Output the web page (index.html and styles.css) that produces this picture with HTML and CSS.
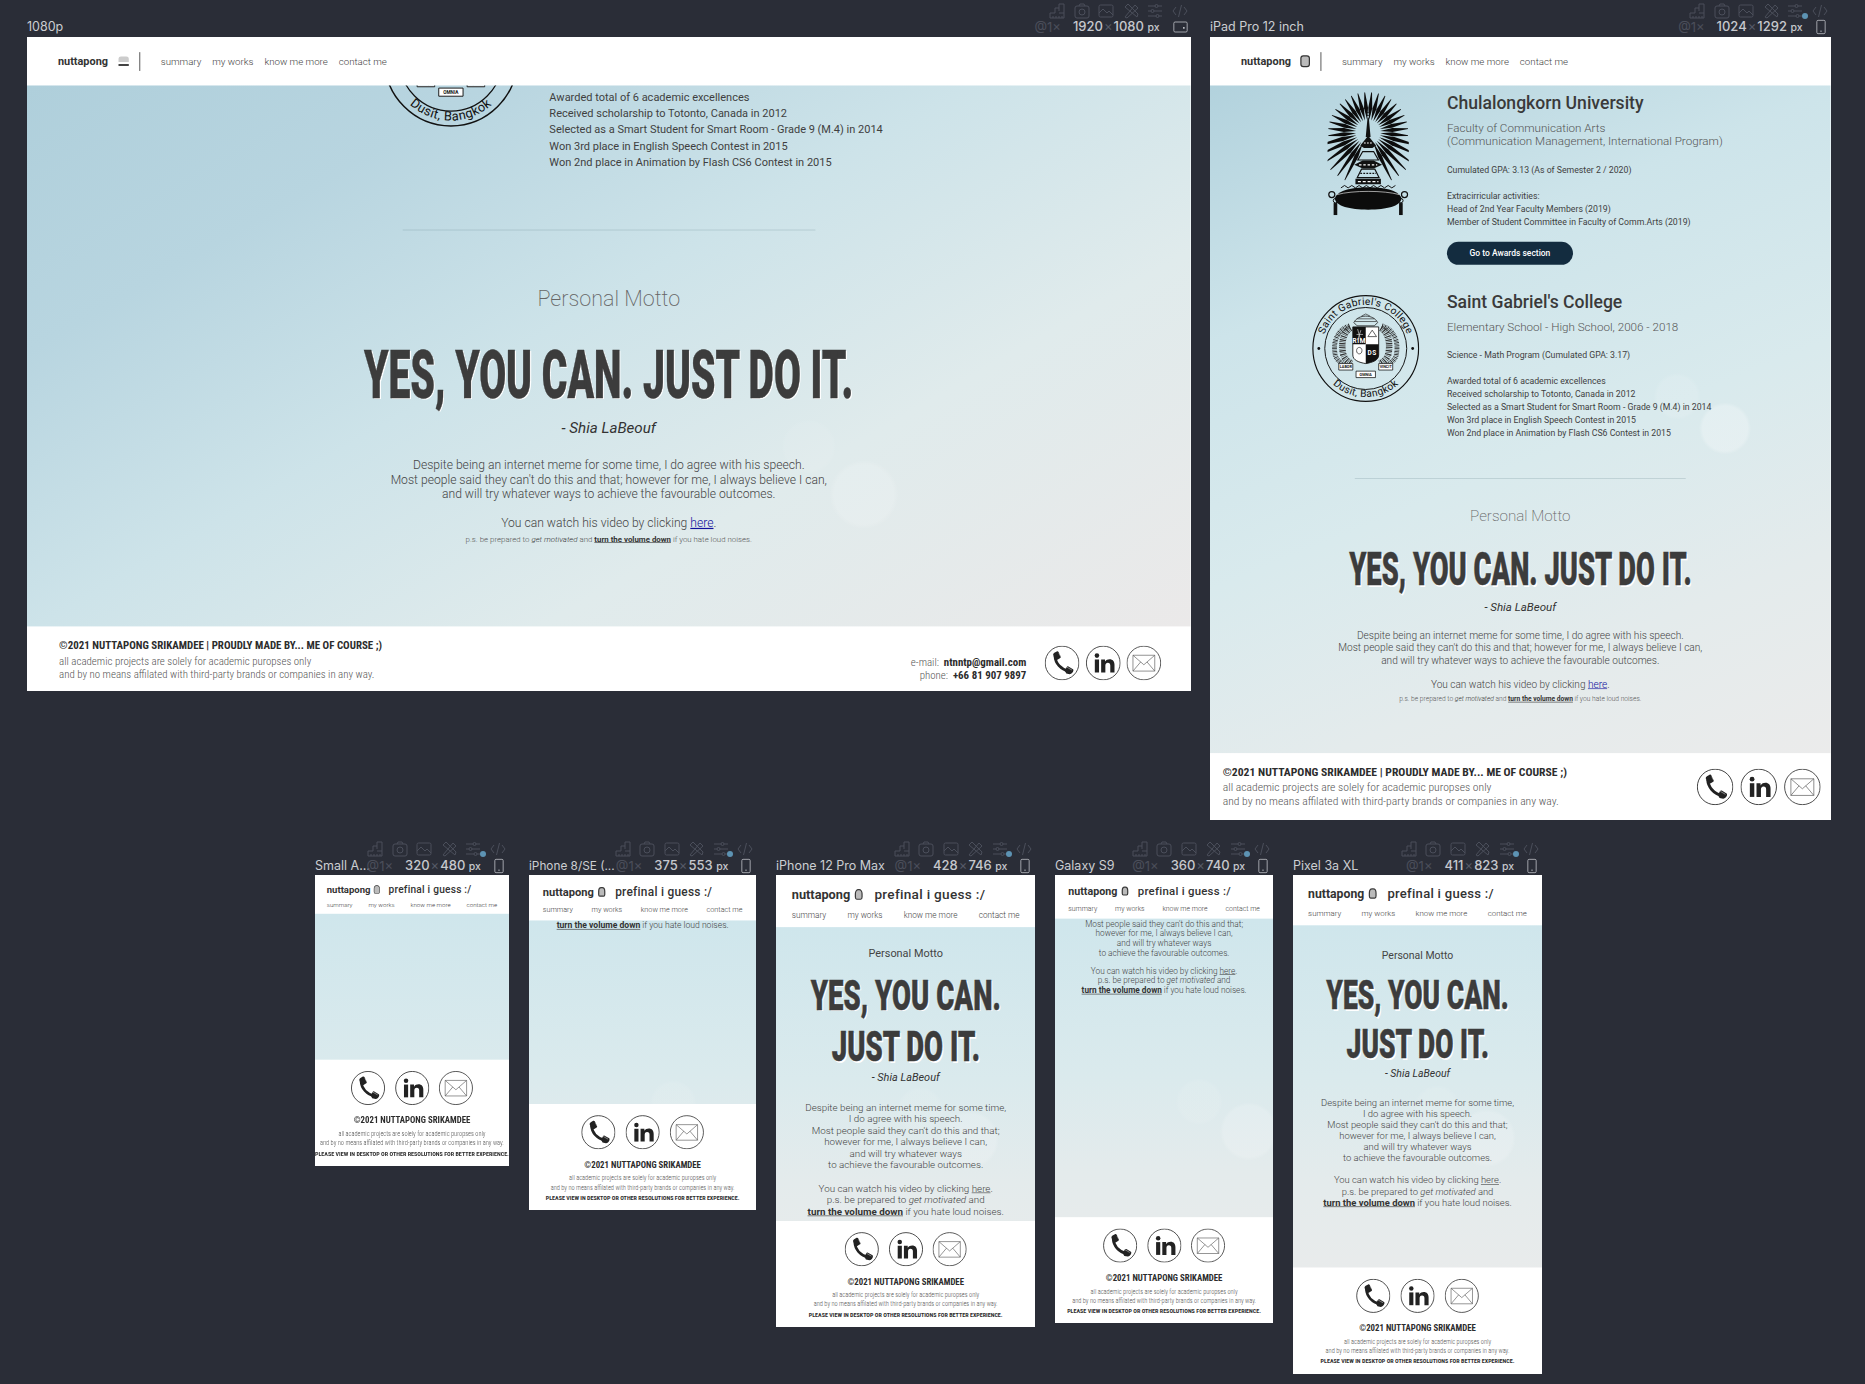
FILE: index.html
```html
<!DOCTYPE html>
<html lang="en">
<head>
<meta charset="utf-8">
<title>Responsive preview - nuttapong</title>
<link rel="stylesheet" href="styles.css">
</head>
<body>
<svg class="sprite" xmlns="http://www.w3.org/2000/svg">
  <defs>
    <symbol id="i-ruler" viewBox="0 0 16 16"><path d="M1 15V10H6V5H10V1H15V15ZM4 15V13M7 15V13M10 15V13M13 15V13M10 5V8M10 10H15" fill="none" stroke="currentColor"/></symbol>
    <symbol id="i-camera" viewBox="0 0 16 16"><rect x="1" y="3" width="14" height="12" rx="2" fill="none" stroke="currentColor"/><path d="M5 3 6 1H10L11 3" fill="none" stroke="currentColor"/><circle cx="8" cy="9" r="3" fill="none" stroke="currentColor"/></symbol>
    <symbol id="i-image" viewBox="0 0 16 16"><rect x="1" y="2" width="14" height="12" rx="1.5" fill="none" stroke="currentColor"/><path d="M1 10 5 6 9 10 11 8 15 12" fill="none" stroke="currentColor"/></symbol>
    <symbol id="i-tools" viewBox="0 0 16 16"><path d="M2 14 12 2 15 5 4 15ZM14 14 2 4 5 1 15 11Z" fill="none" stroke="currentColor"/></symbol>
    <symbol id="i-sliders" viewBox="0 0 16 16"><path d="M1 3H8M11 3H15M1 8H4M7 8H15M1 13H9M12 13H15" fill="none" stroke="currentColor"/><circle cx="9.5" cy="3" r="1.5" fill="none" stroke="currentColor"/><circle cx="5.5" cy="8" r="1.5" fill="none" stroke="currentColor"/><circle cx="10.5" cy="13" r="1.5" fill="none" stroke="currentColor"/></symbol>
    <symbol id="i-code" viewBox="0 0 16 16"><path d="M4 4 1 8 4 12M12 4 15 8 12 12M9.5 2 6.5 14" fill="none" stroke="currentColor"/></symbol>
    <symbol id="i-phone-frame" viewBox="0 0 12 18"><rect x="1" y="1" width="10" height="16" rx="1.5" fill="none" stroke="currentColor"/><path d="M5 14H7" stroke="currentColor"/></symbol>
    <symbol id="i-desk-frame" viewBox="0 0 18 14"><rect x="1" y="1" width="16" height="12" rx="1.5" fill="none" stroke="currentColor"/><path d="M13 7V9" stroke="currentColor" stroke-width="2"/></symbol>

    <symbol id="s-phone" viewBox="0 0 100 100">
      <circle cx="50" cy="50" r="48" fill="#fff" stroke="#2c2c2c" stroke-width="2.4"/>
      <path d="M30 30C31 51 46 68 70 74" fill="none" stroke="#222" stroke-width="8"/>
      <path d="M25 28C24 25 26 22 28 21L35 17C37 16 39 17 40 19L46 31C47 33 46 35 45 36L37 41 31 41Z" fill="#222"/>
      <path d="M58 72 63 62C64 60 66 59 68 60L80 67C82 68 83 70 82 73 81 77 77 81 72 82L62 80Z" fill="#222"/>
      <path d="M41 22 46 32M64 62 78 70" stroke="#fff" stroke-width="1.2"/>
    </symbol>
    <symbol id="s-in" viewBox="0 0 100 100">
      <circle cx="50" cy="50" r="48" fill="#fff" stroke="#2c2c2c" stroke-width="2.4"/>
      <circle cx="32" cy="29" r="6.5" fill="#222"/>
      <rect x="26" y="40" width="12" height="37" fill="#222"/>
      <path d="M44 40H55V46C58 41 63 39 68 39 77 39 82 45 82 55V77H70V57C70 52 68 49 63 49 58 49 56 53 56 57V77H44Z" fill="#222"/>
    </symbol>
    <symbol id="s-mail" viewBox="0 0 100 100">
      <circle cx="50" cy="50" r="48" fill="#fff" stroke="#3a3a3a" stroke-width="2.4"/>
      <path d="M19 28H81V73H19ZM19 28 50 55 81 28M19 73 41 47M81 73 59 47" fill="none" stroke="#555" stroke-width="1.8"/>
    </symbol>

    <path id="seal-top" d="M100 100m-81 0a81 81 0 0 1 162 0"/>
    <path id="seal-bot" d="M100 100m-90 0a90 90 0 0 0 180 0"/>
    <symbol id="seal" viewBox="0 0 200 200">
      <circle cx="100" cy="100" r="98" fill="none" stroke="#111" stroke-width="2.2"/>
      <circle cx="100" cy="100" r="76" fill="none" stroke="#111" stroke-width="1.8"/>
      <circle cx="13" cy="100" r="2.6" fill="#111"/>
      <circle cx="187" cy="100" r="2.6" fill="#111"/>
      <text class="seal-text"><textPath href="#seal-top" startOffset="50%" text-anchor="middle">Saint Gabriel's College</textPath></text>
      <text class="seal-text"><textPath href="#seal-bot" startOffset="50%" text-anchor="middle">Dusit, Bangkok</textPath></text>
      <path d="M78 52C85 36 115 36 122 52L116 58H84Z" fill="none" stroke="#222" stroke-width="1.5"/>
      <path d="M80 50H120M84 45H116M92 40 100 36 108 40" stroke="#222" stroke-width="1.2" fill="none"/>
      <path d="M70 58C46 66 38 90 44 114 48 124 58 130 70 134" fill="none" stroke="#222" stroke-width="9" stroke-dasharray="1.6 1.4 .8 1.6"/>
      <path d="M130 58C154 66 162 90 156 114 152 124 142 130 130 134" fill="none" stroke="#222" stroke-width="9" stroke-dasharray="1.6 1.4 .8 1.6"/>
      <path d="M72 62C58 70 54 90 58 110 60 118 66 124 74 128" fill="none" stroke="#333" stroke-width="12" stroke-dasharray="2.4 1.4 1 1.8"/>
      <path d="M128 62C142 70 146 90 142 110 140 118 134 124 126 128" fill="none" stroke="#333" stroke-width="12" stroke-dasharray="2.4 1.4 1 1.8"/>
      <path d="M76 60H124V112C124 122 112 126 100 128 88 126 76 122 76 112Z" fill="#fff" stroke="#111" stroke-width="1.6"/>
      <path d="M76 60H100V92H76Z" fill="#111"/>
      <path d="M100 92H124V112C124 122 112 126 100 128Z" fill="#111"/>
      <path d="M85 64 91 86M91 66 85 84M83 74H95" stroke="#ddd" stroke-width="1.2"/>
      <text class="seal-ds" x="112" y="112" text-anchor="middle">DS</text>
      <text class="seal-ds" x="88" y="90" text-anchor="middle">RIM</text>
      <path d="M104 78 112 66 120 78ZM83 104C83 112 93 112 93 104 93 96 83 96 83 104Z" fill="none" stroke="#333" stroke-width="1.4"/>
      <path d="M50 128H76V140H50ZM124 128H150V140H124ZM82 142H118V154H82Z" fill="#fff" stroke="#111" stroke-width="1.4"/>
      <text class="seal-motto" x="63" y="137" text-anchor="middle">LABOR</text>
      <text class="seal-motto" x="137" y="137" text-anchor="middle">VINCIT</text>
      <text class="seal-motto" x="100" y="151" text-anchor="middle">OMNIA</text>
    </symbol>

    <polygon id="ray" points="0,-20 3.3,-40 0.6,-66 -0.6,-66 -3.3,-40"/>
    <polygon id="ray-long" points="0,-20 3.4,-44 0.6,-88 -0.6,-88 -3.4,-44"/>
    <symbol id="chula" viewBox="0 0 134 203">
      <g transform="translate(67 66)" fill="#0c0c0c">
        <use href="#ray" transform="rotate(5)"/><use href="#ray" transform="rotate(15)"/><use href="#ray" transform="rotate(25)"/><use href="#ray" transform="rotate(35)"/><use href="#ray" transform="rotate(45)"/><use href="#ray" transform="rotate(55)"/><use href="#ray" transform="rotate(65)"/><use href="#ray" transform="rotate(75)"/><use href="#ray" transform="rotate(85)"/><use href="#ray" transform="rotate(95)"/>
        <use href="#ray" transform="rotate(-5)"/><use href="#ray" transform="rotate(-15)"/><use href="#ray" transform="rotate(-25)"/><use href="#ray" transform="rotate(-35)"/><use href="#ray" transform="rotate(-45)"/><use href="#ray" transform="rotate(-55)"/><use href="#ray" transform="rotate(-65)"/><use href="#ray" transform="rotate(-75)"/><use href="#ray" transform="rotate(-85)"/><use href="#ray" transform="rotate(-95)"/>
        <use href="#ray-long" transform="rotate(105)"/><use href="#ray-long" transform="rotate(115)"/><use href="#ray-long" transform="rotate(125)"/><use href="#ray-long" transform="rotate(135)"/><use href="#ray-long" transform="rotate(145)"/><use href="#ray-long" transform="rotate(154)"/>
        <use href="#ray-long" transform="rotate(-105)"/><use href="#ray-long" transform="rotate(-115)"/><use href="#ray-long" transform="rotate(-125)"/><use href="#ray-long" transform="rotate(-135)"/><use href="#ray-long" transform="rotate(-145)"/><use href="#ray-long" transform="rotate(-154)"/>
      </g>
      <circle cx="67" cy="36" r="2.8" fill="none" stroke="#111" stroke-width="1.2"/>
      <path d="M66 42H68L71 74H63Z" fill="#111"/>
      <path d="M54 88 67 72 80 88 74 92H60Z" fill="#111"/>
      <path d="M60 84H74" stroke="#fff" stroke-width="1.8" stroke-dasharray="3 2"/>
      <path d="M58 98H76L84 112H50Z" fill="none" stroke="#111" stroke-width="2"/>
      <path d="M44 120 58 113H76L90 120 76 126H58Z" fill="#111"/>
      <path d="M52 120H82" stroke="#fff" stroke-width="2" stroke-dasharray="4 3"/>
      <path d="M56 127H78L85 141H49Z" fill="none" stroke="#111" stroke-width="2"/>
      <path d="M54 134H80" stroke="#111" stroke-width="2" stroke-dasharray="3 2"/>
      <path d="M46 143H88V152H46Z" fill="#111"/>
      <path d="M50 147.5H84" stroke="#fff" stroke-width="2" stroke-dasharray="5 3"/>
      <path d="M22 158 28 154 34 158 40 154 46 158 52 154 58 158 64 154 70 158 76 154 82 158 88 154 94 158 100 154 106 158 112 154" fill="none" stroke="#111" stroke-width="1.6"/>
      <path d="M12 176C14 164 36 157 67 157 98 157 120 164 122 176 120 188 98 194 67 194 36 194 14 188 12 176Z" fill="#0c0c0c"/>
      <path d="M16 169C40 162 94 162 118 169" fill="none" stroke="#fff" stroke-width="1"/>
      <circle cx="7" cy="169" r="5" fill="none" stroke="#111" stroke-width="2"/>
      <circle cx="127" cy="169" r="5" fill="none" stroke="#111" stroke-width="2"/>
      <rect x="10" y="183" width="6" height="20" fill="#111"/>
      <rect x="118" y="183" width="6" height="20" fill="#111"/>
      <circle cx="13" cy="179" r="3.6" fill="none" stroke="#111" stroke-width="1.6"/>
      <circle cx="121" cy="179" r="3.6" fill="none" stroke="#111" stroke-width="1.6"/>
    </symbol>
  </defs>
</svg>

<!-- 1080p -->
<section class="window win-1080">
  <div class="win-tools"><svg class="tool"><use href="#i-ruler"/></svg><svg class="tool"><use href="#i-camera"/></svg><svg class="tool"><use href="#i-image"/></svg><svg class="tool"><use href="#i-tools"/></svg><svg class="tool"><use href="#i-sliders"/></svg><svg class="tool"><use href="#i-code"/></svg></div>
  <div class="win-label"><span class="win-name">1080p</span><span class="win-meta"><span class="dim">@1×</span><span class="size">1920<i class="x">×</i>1080 <small>px</small></span><svg class="device device-wide"><use href="#i-desk-frame"/></svg></span></div>
  <div class="frame"><div class="screen desktop">
    <header class="head">
      <strong class="name">nuttapong</strong><span class="glyph glyph-desk"></span><span class="bar"></span>
      <nav class="nav"><a>summary</a><a>my works</a><a>know me more</a><a>contact me</a></nav>
    </header>
    <main class="main">
      <div class="school school-clipped">
        <svg class="seal"><use href="#seal"/></svg>
        <p class="body">Awarded total of 6 academic excellences<br>Received scholarship to Totonto, Canada in 2012<br>Selected as a Smart Student for Smart Room - Grade 9 (M.4) in 2014<br>Won 3rd place in English Speech Contest in 2015<br>Won 2nd place in Animation by Flash CS6 Contest in 2015</p>
      </div>
      <hr class="rule">
      <div class="motto">
        <h2 class="motto-label">Personal Motto</h2>
        <div class="motto-title"><span>YES, YOU CAN. JUST DO IT.</span></div>
        <p class="motto-by">- Shia LaBeouf</p>
        <p class="motto-text">Despite being an internet meme for some time, I do agree with his speech.<br>Most people said they can't do this and that; however for me, I always believe I can,<br>and will try whatever ways to achieve the favourable outcomes.</p>
        <p class="motto-watch">You can watch his video by clicking <a class="link" >here</a>.</p>
        <p class="motto-ps">p.s. be prepared to <em>get motivated</em> and <b class="und">turn the volume down</b> if you hate loud noises.</p>
      </div>
    </main>
    <footer class="foot">
      <div class="legal">
        <p class="legal-title">©2021 NUTTAPONG SRIKAMDEE | PROUDLY MADE BY... ME OF COURSE ;)</p>
        <p class="legal-text">all academic projects are solely for academic puropses only<br>and by no means affilated with third-party brands or companies in any way.</p>
      </div>
      <div class="contact"><p>e-mail: &nbsp;<b>ntnntp@gmail.com</b></p><p>phone: &nbsp;<b>+66 81 907 9897</b></p></div>
      <div class="socials"><svg class="social"><use href="#s-phone"/></svg><svg class="social"><use href="#s-in"/></svg><svg class="social"><use href="#s-mail"/></svg></div>
    </footer>
  </div></div>
</section>

<!-- iPad -->
<section class="window win-ipad">
  <div class="win-tools"><svg class="tool"><use href="#i-ruler"/></svg><svg class="tool"><use href="#i-camera"/></svg><svg class="tool"><use href="#i-image"/></svg><svg class="tool"><use href="#i-tools"/></svg><svg class="tool"><use href="#i-sliders"/></svg><svg class="tool"><use href="#i-code"/></svg><span class="tool-dot"></span></div>
  <div class="win-label"><span class="win-name">iPad Pro 12 inch</span><span class="win-meta"><span class="dim">@1×</span><span class="size">1024<i class="x">×</i>1292 <small>px</small></span><svg class="device"><use href="#i-phone-frame"/></svg></span></div>
  <div class="frame"><div class="screen tablet">
    <header class="head">
      <strong class="name">nuttapong</strong><span class="glyph glyph-tablet"></span><span class="bar"></span>
      <nav class="nav"><a>summary</a><a>my works</a><a>know me more</a><a>contact me</a></nav>
    </header>
    <main class="main">
      <div class="school school-chula">
        <svg class="chula"><use href="#chula"/></svg>
        <div class="school-info">
          <h3 class="school-name">Chulalongkorn University</h3>
          <p class="school-sub">Faculty of Communication Arts<br>(Communication Management, International Program)</p>
          <p class="body body-first">Cumulated GPA: 3.13 (As of Semester 2 / 2020)</p>
          <p class="body body-gap">Extracirricular activities:<br>Head of 2nd Year Faculty Members (2019)<br>Member of Student Committee in Faculty of Comm.Arts (2019)</p>
          <a class="cta">Go to Awards section</a>
        </div>
      </div>
      <div class="school school-gabriel">
        <svg class="seal"><use href="#seal"/></svg>
        <div class="school-info">
          <h3 class="school-name">Saint Gabriel's College</h3>
          <p class="school-sub">Elementary School - High School, 2006 - 2018</p>
          <p class="body body-first">Science - Math Program (Cumulated GPA: 3.17)</p>
          <p class="body body-gap">Awarded total of 6 academic excellences<br>Received scholarship to Totonto, Canada in 2012<br>Selected as a Smart Student for Smart Room - Grade 9 (M.4) in 2014<br>Won 3rd place in English Speech Contest in 2015<br>Won 2nd place in Animation by Flash CS6 Contest in 2015</p>
        </div>
      </div>
      <hr class="rule">
      <div class="motto">
        <h2 class="motto-label">Personal Motto</h2>
        <div class="motto-title"><span>YES, YOU CAN. JUST DO IT.</span></div>
        <p class="motto-by">- Shia LaBeouf</p>
        <p class="motto-text">Despite being an internet meme for some time, I do agree with his speech.<br>Most people said they can't do this and that; however for me, I always believe I can,<br>and will try whatever ways to achieve the favourable outcomes.</p>
        <p class="motto-watch">You can watch his video by clicking <a class="link">here</a>.</p>
        <p class="motto-ps">p.s. be prepared to <em>get motivated</em> and <b class="und">turn the volume down</b> if you hate loud noises.</p>
      </div>
    </main>
    <footer class="foot">
      <div class="legal">
        <p class="legal-title">©2021 NUTTAPONG SRIKAMDEE | PROUDLY MADE BY... ME OF COURSE ;)</p>
        <p class="legal-text">all academic projects are solely for academic puropses only<br>and by no means affilated with third-party brands or companies in any way.</p>
      </div>
      <div class="socials"><svg class="social"><use href="#s-phone"/></svg><svg class="social"><use href="#s-in"/></svg><svg class="social"><use href="#s-mail"/></svg></div>
    </footer>
  </div></div>
</section>

<!-- Small Android -->
<section class="window win-small">
  <div class="win-tools"><svg class="tool"><use href="#i-ruler"/></svg><svg class="tool"><use href="#i-camera"/></svg><svg class="tool"><use href="#i-image"/></svg><svg class="tool"><use href="#i-tools"/></svg><svg class="tool"><use href="#i-sliders"/></svg><svg class="tool"><use href="#i-code"/></svg><span class="tool-dot"></span></div>
  <div class="win-label"><span class="win-name">Small A...</span><span class="win-meta"><span class="dim">@1×</span><span class="size">320<i class="x">×</i>480 <small>px</small></span><svg class="device"><use href="#i-phone-frame"/></svg></span></div>
  <div class="frame"><div class="screen mobile">
    <header class="head">
      <div class="head-row"><strong class="name">nuttapong</strong><span class="glyph glyph-phone"></span><strong class="name name-note">prefinal i guess :/</strong></div>
      <nav class="nav"><a>summary</a><a>my works</a><a>know me more</a><a>contact me</a></nav>
    </header>
    <main class="main"></main>
    <footer class="foot">
      <div class="socials"><svg class="social"><use href="#s-phone"/></svg><svg class="social"><use href="#s-in"/></svg><svg class="social"><use href="#s-mail"/></svg></div>
      <p class="legal-title">©2021 NUTTAPONG SRIKAMDEE</p>
      <p class="legal-text">all academic projects are solely for academic puropses only<br>and by no means affilated with third-party brands or companies in any way.</p>
      <p class="legal-note">PLEASE VIEW IN DESKTOP OR OTHER RESOLUTIONS FOR BETTER EXPERIENCE.</p>
    </footer>
  </div></div>
</section>

<!-- iPhone 8 -->
<section class="window win-i8">
  <div class="win-tools"><svg class="tool"><use href="#i-ruler"/></svg><svg class="tool"><use href="#i-camera"/></svg><svg class="tool"><use href="#i-image"/></svg><svg class="tool"><use href="#i-tools"/></svg><svg class="tool"><use href="#i-sliders"/></svg><svg class="tool"><use href="#i-code"/></svg><span class="tool-dot"></span></div>
  <div class="win-label"><span class="win-name">iPhone 8/SE (...</span><span class="win-meta"><span class="dim">@1×</span><span class="size">375<i class="x">×</i>553 <small>px</small></span><svg class="device"><use href="#i-phone-frame"/></svg></span></div>
  <div class="frame"><div class="screen mobile">
    <header class="head">
      <div class="head-row"><strong class="name">nuttapong</strong><span class="glyph glyph-phone"></span><strong class="name name-note">prefinal i guess :/</strong></div>
      <nav class="nav"><a>summary</a><a>my works</a><a>know me more</a><a>contact me</a></nav>
    </header>
    <main class="main">
      <p class="motto-text motto-tail"><b class="und">turn the volume down</b> if you hate loud noises.</p>
    </main>
    <footer class="foot">
      <div class="socials"><svg class="social"><use href="#s-phone"/></svg><svg class="social"><use href="#s-in"/></svg><svg class="social"><use href="#s-mail"/></svg></div>
      <p class="legal-title">©2021 NUTTAPONG SRIKAMDEE</p>
      <p class="legal-text">all academic projects are solely for academic puropses only<br>and by no means affilated with third-party brands or companies in any way.</p>
      <p class="legal-note">PLEASE VIEW IN DESKTOP OR OTHER RESOLUTIONS FOR BETTER EXPERIENCE.</p>
    </footer>
  </div></div>
</section>

<!-- iPhone 12 Pro Max -->
<section class="window win-i12">
  <div class="win-tools"><svg class="tool"><use href="#i-ruler"/></svg><svg class="tool"><use href="#i-camera"/></svg><svg class="tool"><use href="#i-image"/></svg><svg class="tool"><use href="#i-tools"/></svg><svg class="tool"><use href="#i-sliders"/></svg><svg class="tool"><use href="#i-code"/></svg><span class="tool-dot"></span></div>
  <div class="win-label"><span class="win-name">iPhone 12 Pro Max</span><span class="win-meta"><span class="dim">@1×</span><span class="size">428<i class="x">×</i>746 <small>px</small></span><svg class="device"><use href="#i-phone-frame"/></svg></span></div>
  <div class="frame"><div class="screen mobile">
    <header class="head">
      <div class="head-row"><strong class="name">nuttapong</strong><span class="glyph glyph-phone"></span><strong class="name name-note">prefinal i guess :/</strong></div>
      <nav class="nav"><a>summary</a><a>my works</a><a>know me more</a><a>contact me</a></nav>
    </header>
    <main class="main">
      <div class="motto">
        <h2 class="motto-label">Personal Motto</h2>
        <div class="motto-title"><span>YES, YOU CAN.</span></div>
        <div class="motto-title"><span>JUST DO IT.</span></div>
        <p class="motto-by">- Shia LaBeouf</p>
        <p class="motto-text">Despite being an internet meme for some time,<br>I do agree with his speech.<br>Most people said they can't do this and that;<br>however for me, I always believe I can,<br>and will try whatever ways<br>to achieve the favourable outcomes.</p>
        <p class="motto-text motto-gap">You can watch his video by clicking <a class="und-plain">here</a>.<br>p.s. be prepared to <em>get motivated</em> and<br><b class="und">turn the volume down</b> if you hate loud noises.</p>
      </div>
    </main>
    <footer class="foot">
      <div class="socials"><svg class="social"><use href="#s-phone"/></svg><svg class="social"><use href="#s-in"/></svg><svg class="social"><use href="#s-mail"/></svg></div>
      <p class="legal-title">©2021 NUTTAPONG SRIKAMDEE</p>
      <p class="legal-text">all academic projects are solely for academic puropses only<br>and by no means affilated with third-party brands or companies in any way.</p>
      <p class="legal-note">PLEASE VIEW IN DESKTOP OR OTHER RESOLUTIONS FOR BETTER EXPERIENCE.</p>
    </footer>
  </div></div>
</section>

<!-- Galaxy S9 -->
<section class="window win-s9">
  <div class="win-tools"><svg class="tool"><use href="#i-ruler"/></svg><svg class="tool"><use href="#i-camera"/></svg><svg class="tool"><use href="#i-image"/></svg><svg class="tool"><use href="#i-tools"/></svg><svg class="tool"><use href="#i-sliders"/></svg><svg class="tool"><use href="#i-code"/></svg><span class="tool-dot"></span></div>
  <div class="win-label"><span class="win-name">Galaxy S9</span><span class="win-meta"><span class="dim">@1×</span><span class="size">360<i class="x">×</i>740 <small>px</small></span><svg class="device"><use href="#i-phone-frame"/></svg></span></div>
  <div class="frame"><div class="screen mobile">
    <header class="head">
      <div class="head-row"><strong class="name">nuttapong</strong><span class="glyph glyph-phone"></span><strong class="name name-note">prefinal i guess :/</strong></div>
      <nav class="nav"><a>summary</a><a>my works</a><a>know me more</a><a>contact me</a></nav>
    </header>
    <main class="main">
      <p class="motto-text motto-scrolled">Most people said they can't do this and that;<br>however for me, I always believe I can,<br>and will try whatever ways<br>to achieve the favourable outcomes.</p>
      <p class="motto-text motto-gap">You can watch his video by clicking <a class="und-plain">here</a>.<br>p.s. be prepared to <em>get motivated</em> and<br><b class="und">turn the volume down</b> if you hate loud noises.</p>
    </main>
    <footer class="foot">
      <div class="socials"><svg class="social"><use href="#s-phone"/></svg><svg class="social"><use href="#s-in"/></svg><svg class="social"><use href="#s-mail"/></svg></div>
      <p class="legal-title">©2021 NUTTAPONG SRIKAMDEE</p>
      <p class="legal-text">all academic projects are solely for academic puropses only<br>and by no means affilated with third-party brands or companies in any way.</p>
      <p class="legal-note">PLEASE VIEW IN DESKTOP OR OTHER RESOLUTIONS FOR BETTER EXPERIENCE.</p>
    </footer>
  </div></div>
</section>

<!-- Pixel 3a XL -->
<section class="window win-pixel">
  <div class="win-tools"><svg class="tool"><use href="#i-ruler"/></svg><svg class="tool"><use href="#i-camera"/></svg><svg class="tool"><use href="#i-image"/></svg><svg class="tool"><use href="#i-tools"/></svg><svg class="tool"><use href="#i-sliders"/></svg><svg class="tool"><use href="#i-code"/></svg><span class="tool-dot"></span></div>
  <div class="win-label"><span class="win-name">Pixel 3a XL</span><span class="win-meta"><span class="dim">@1×</span><span class="size">411<i class="x">×</i>823 <small>px</small></span><svg class="device"><use href="#i-phone-frame"/></svg></span></div>
  <div class="frame"><div class="screen mobile">
    <header class="head">
      <div class="head-row"><strong class="name">nuttapong</strong><span class="glyph glyph-phone"></span><strong class="name name-note">prefinal i guess :/</strong></div>
      <nav class="nav"><a>summary</a><a>my works</a><a>know me more</a><a>contact me</a></nav>
    </header>
    <main class="main">
      <div class="motto">
        <h2 class="motto-label">Personal Motto</h2>
        <div class="motto-title"><span>YES, YOU CAN.</span></div>
        <div class="motto-title"><span>JUST DO IT.</span></div>
        <p class="motto-by">- Shia LaBeouf</p>
        <p class="motto-text">Despite being an internet meme for some time,<br>I do agree with his speech.<br>Most people said they can't do this and that;<br>however for me, I always believe I can,<br>and will try whatever ways<br>to achieve the favourable outcomes.</p>
        <p class="motto-text motto-gap">You can watch his video by clicking <a class="und-plain">here</a>.<br>p.s. be prepared to <em>get motivated</em> and<br><b class="und">turn the volume down</b> if you hate loud noises.</p>
      </div>
    </main>
    <footer class="foot">
      <div class="socials"><svg class="social"><use href="#s-phone"/></svg><svg class="social"><use href="#s-in"/></svg><svg class="social"><use href="#s-mail"/></svg></div>
      <p class="legal-title">©2021 NUTTAPONG SRIKAMDEE</p>
      <p class="legal-text">all academic projects are solely for academic puropses only<br>and by no means affilated with third-party brands or companies in any way.</p>
      <p class="legal-note">PLEASE VIEW IN DESKTOP OR OTHER RESOLUTIONS FOR BETTER EXPERIENCE.</p>
    </footer>
  </div></div>
</section>
</body>
</html>
```
FILE: styles.css
```css
* { box-sizing: border-box; }
html, body { margin: 0; padding: 0; }
body {
  width: 1865px;
  height: 1384px;
  position: relative;
  overflow: hidden;
  background: #2a2d37;
  font-family: Roboto, "Liberation Sans", sans-serif;
  color: #3a3a3a;
}
p, h2, h3 { margin: 0; font-weight: inherit; }
a { color: inherit; }
.sprite { position: absolute; width: 0; height: 0; }

/* artboards on the canvas */
.window {
  position: absolute;
  --s: .606;
  width: calc(var(--w) * var(--s) * 1px);
  padding-top: 3px;
}
.win-1080  { left: 27px;   top: 0;     --w: 1920; --h: 1080; }
.win-ipad  { left: 1210px; top: 0;     --w: 1024; --h: 1292; }
.win-small { left: 315px;  top: 838px; --w: 320;  --h: 480; --k: .748; }
.win-i8    { left: 529px;  top: 838px; --w: 375;  --h: 553; --k: .876; }
.win-i12   { left: 776px;  top: 838px; --w: 428;  --h: 746; --k: 1; }
.win-s9    { left: 1055px; top: 838px; --w: 360;  --h: 740; --k: .841; }
.win-pixel { left: 1293px; top: 838px; --w: 411;  --h: 823; --k: .96; }

.win-tools {
  display: flex;
  justify-content: flex-end;
  gap: 8.5px;
  height: 16px;
  padding-right: 3px;
  color: #4b4f5b;
  position: relative;
}
.tool { width: 16px; height: 16px; }
.tool-dot {
  position: absolute;
  right: 23px;
  top: 10px;
  width: 6px;
  height: 6px;
  border-radius: 50%;
  background: #5d93b3;
}
.win-label {
  display: flex;
  align-items: center;
  height: 16px;
  margin-bottom: 2px;
  font: 400 13px/16px Inter, Roboto, sans-serif;
  color: #ccced2;
  white-space: nowrap;
}
.window:has(.mobile) .win-label { margin-top: 1px; margin-bottom: 1px; }
.win-name { flex: 0 1 auto; min-width: 0; font-size: 12.5px; }
.win-i8 .win-name { font-size: 11.8px; }
.win-meta { margin-left: auto; flex: none; display: flex; align-items: center; }
.dim { color: #4a4e5a; margin-right: 12px; }
.size { font-weight: 500; color: #c6c8cd; margin-right: 13px; }
.size small { font-size: 10.5px; }
.x { color: #555a66; font-style: normal; font-weight: 400; margin: 0 1px; }
.device { width: 10px; height: 16px; margin-right: 5px; color: #b9bcc2; }
.device-wide { width: 15px; height: 12px; margin-right: 3px; }

.frame {
  width: calc(var(--w) * var(--s) * 1px);
  height: calc(var(--h) * var(--s) * 1px);
  overflow: hidden;
  background: #fff;
}
.screen {
  width: calc(var(--w) * 1px);
  height: calc(var(--h) * 1px);
  transform: scale(var(--s));
  transform-origin: 0 0;
  display: flex;
  flex-direction: column;
  background: #fff;
}

/* ---- header ---- */
.head { flex: none; background: #fff; }
.name { font-weight: 700; color: #333; white-space: nowrap; }
.nav { display: flex; font-weight: 300; color: #444; white-space: nowrap; }
.desktop .head, .tablet .head {
  height: 80px;
  padding-left: 51px;
  display: flex;
  align-items: center;
}
.desktop .name, .tablet .name { font-size: 18px; }
.desktop .nav, .tablet .nav { font-size: 16px; gap: 18px; margin-left: 34px; }
.bar { width: 2px; height: 31px; background: #777; margin-left: 17px; }
.glyph { display: block; flex: none; }
.glyph-desk {
  width: 17px;
  height: 16px;
  margin-left: 17px;
  border-radius: 4px 4px 0 0;
  background: linear-gradient(#ccc 0 10px, transparent 10px 13px, #444 13px);
}
.glyph-tablet {
  width: 16px;
  height: 20px;
  margin-left: 15px;
  border: 2.5px solid #333;
  border-radius: 5px;
  background: #bbb;
}
.glyph-phone {
  width: calc(var(--k) * 13px);
  height: calc(var(--k) * 18px);
  margin-left: calc(var(--k) * 8px);
  border-radius: 45% 45% 25% 25%;
  border: calc(var(--k) * 2.5px) solid #3a3a3a;
  background: #bbb;
}
.mobile .head { height: calc(var(--k) * 86px); padding: calc(var(--k) * 17px) calc(var(--k) * 26px) 0; }
.head-row { display: flex; align-items: center; height: calc(var(--k) * 30px); }
.mobile .name { font-size: calc(var(--k) * 21px); font-weight: 700; }
.mobile .name-note { margin-left: calc(var(--k) * 19px); font-size: calc(var(--k) * 22.4px); font-weight: 500; letter-spacing: calc(var(--k) * .5px); }
.mobile .nav {
  justify-content: space-between;
  font-size: calc(var(--k) * 13.6px);
  line-height: calc(var(--k) * 20px);
  margin-top: calc(var(--k) * 9px);
}

/* ---- wallpaper ---- */
.main {
  flex: 1;
  min-height: 0;
  overflow: hidden;
  --c1: 320px 351px;
  --c2: 238px 302px;
  --r1: 45px;
  --r2: 36px;
  background:
    radial-gradient(circle at var(--c1), rgba(255,255,255,.16) calc(var(--r1) - 3px), transparent calc(var(--r1) + 3px)),
    radial-gradient(circle at var(--c2), rgba(255,255,255,.08) calc(var(--r2) - 3px), transparent calc(var(--r2) + 3px)),
    linear-gradient(180deg, #cfe6ec 0, #daeaed 250px, #e4ebec 420px, #ebebeb 650px);
}
.desktop .main {
  --c1: 1381px 675px;
  --c2: 1290px 596px;
  --r1: 53px;
  --r2: 42px;
  background:
    radial-gradient(circle at var(--c1), rgba(255,255,255,.15) calc(var(--r1) - 4px), transparent calc(var(--r1) + 4px)),
    radial-gradient(circle at var(--c2), rgba(255,255,255,.07) calc(var(--r2) - 4px), transparent calc(var(--r2) + 4px)),
    linear-gradient(150deg, #afcfdb 0%, #b8d5e0 22%, #cde3e9 45%, #e0ebec 69%, #ebe9e9 100%);
}
.tablet .main {
  --c1: 850px 566px;
  --c2: 771px 513px;
  --r1: 40px;
  --r2: 36px;
  background:
    radial-gradient(circle at var(--c1), rgba(255,255,255,.25) calc(var(--r1) - 3px), transparent calc(var(--r1) + 3px)),
    radial-gradient(circle at var(--c2), rgba(255,255,255,.1) calc(var(--r2) - 3px), transparent calc(var(--r2) + 3px)),
    linear-gradient(158deg, #b2d2dd 0%, #cde4ea 28%, #d9eaed 55%, #e4ebec 78%, #ebebeb 100%);
}

/* ---- schools ---- */
.school { display: flex; }
.school-clipped { padding: 4.5px 0 0 588px; height: 238px; }
.desktop .seal { width: 223px; height: 223px; margin-top: -158.5px; flex: none; }
.seal-text { font: 400 19px Roboto, sans-serif; letter-spacing: .6px; fill: #111; }
.seal-ds { font: 700 12px Roboto, sans-serif; fill: #fff; letter-spacing: 1px; }
.seal-motto { font: 700 7px Roboto, sans-serif; fill: #111; }
.body { font-weight: 400; color: #3f3f3f; }
.desktop .body { font-size: 18.15px; line-height: 27px; margin-left: 51px; white-space: nowrap; }
.tablet .body { font-size: 14.4px; line-height: 21.5px; white-space: nowrap; }
.body-first { margin-top: 26px; }
.body-gap { margin-top: 22px; }
.school-chula { padding: 11px 0 0 194px; }
.chula { width: 134px; height: 203px; flex: none; }
.school-chula .school-info { margin-left: 63px; margin-top: -11px; }
.school-name { font-size: 29px; line-height: 40px; font-weight: 500; color: #3a3a3a; margin-top: 8px; }
.school-sub { font-size: 19.2px; line-height: 21.5px; font-weight: 300; color: #555; margin-top: 12px; }
.cta {
  display: flex;
  align-items: center;
  justify-content: center;
  width: 208px;
  height: 38px;
  margin-top: 21px;
  border-radius: 19px;
  background: #132c3f;
  color: #fff;
  font-size: 14px;
  font-weight: 500;
}
.school-gabriel { padding: 42px 0 0 168px; }
.tablet .seal { width: 178px; height: 178px; flex: none; margin-top: 7px; }
.school-gabriel .school-info { margin-left: 45px; }
.school-gabriel .school-name { margin-top: 0; }
.school-gabriel .school-sub { margin-top: 10px; }
.school-gabriel .body-first { margin-top: 24px; }
.rule {
  display: block;
  height: 1px;
  margin: 0 auto;
  border: 0;
  background: rgba(90,120,130,.35);
}
.desktop .rule { width: 681px; }
.tablet .rule { width: 546px; margin-top: 63px; }

/* ---- motto ---- */
.motto { text-align: center; }
.motto-label { font-weight: 200; color: #666; white-space: nowrap; }
.motto-title { display: flex; justify-content: center; white-space: nowrap; }
.motto-title span {
  flex: none;
  display: block;
  font-weight: 900;
  color: #3c3c3c;
  -webkit-text-stroke: .8px #3c3c3c;
  text-shadow: 3px 3px 0 #fff;
  transform: scaleX(var(--tx, .586));
}
.motto-by { font-style: italic; color: #333; white-space: nowrap; }
.motto-text { font-weight: 300; color: #444; text-align: center; white-space: nowrap; }
.link { color: #11119c; text-decoration: underline; }
.und { font-weight: 700; text-decoration: underline; color: #333; }
.und-plain { text-decoration: underline; }
.motto-watch { font-weight: 300; color: #444; white-space: nowrap; }
.motto-ps { font-weight: 300; color: #555; white-space: nowrap; }
.motto-ps em { color: #333; }

.desktop .motto-label { font-size: 35.5px; line-height: 40px; margin-top: 93px; }
.desktop .motto-title { margin-top: 46px; height: 120px; }
.desktop .motto-title span { font-size: 110px; line-height: 120px; }
.desktop .motto-by { font-size: 25px; line-height: 30px; margin-top: 13px; }
.desktop .motto-text { font-size: 20px; line-height: 23.5px; margin-top: 34px; }
.desktop .motto-watch { font-size: 20px; line-height: 24px; margin-top: 24px; }
.desktop .motto-ps { font-size: 13px; line-height: 16px; margin-top: 7px; }

.tablet .motto-label { font-size: 25px; line-height: 30px; margin-top: 46px; }
.tablet .motto-title { margin-top: 28px; height: 90px; }
.tablet .motto-title span { font-size: 77px; line-height: 90px; }
.tablet .motto-by { font-size: 19px; line-height: 24px; margin-top: 6px; }
.tablet .motto-text { font-size: 16.7px; line-height: 20.5px; margin-top: 26px; }
.tablet .motto-watch { font-size: 16.6px; line-height: 22px; margin-top: 18px; }
.tablet .motto-ps { font-size: 11px; line-height: 16px; margin-top: 5px; }

.mobile { --tx: .65; }
.mobile .motto-label { font-size: calc(var(--k) * 18px); line-height: calc(var(--k) * 24px); font-weight: 400; color: #444; padding-top: calc(var(--k) * 31px); }
.mobile .motto-title { height: calc(var(--k) * 85px); }
.mobile .motto-label + .motto-title { margin-top: calc(var(--k) * 14.5px); }
.mobile .motto-title span { font-size: calc(var(--k) * 70px); line-height: calc(var(--k) * 85px); }
.mobile .motto-by { font-size: calc(var(--k) * 18px); line-height: calc(var(--k) * 20px); margin-top: calc(var(--k) * -1.5px); }
.mobile .motto-text { font-size: calc(var(--k) * 16.2px); line-height: calc(var(--k) * 19px); margin-top: calc(var(--k) * 29.5px); }
.mobile .motto-text.motto-gap { margin-top: calc(var(--k) * 20px); }
.mobile .motto-text.motto-tail { margin-top: 0; padding-top: 0; line-height: 16px; }
.mobile .motto-text.motto-scrolled { margin-top: 0; }
.win-s9 .mobile .motto-text.motto-gap { margin-top: calc(var(--k) * 16px); }
.win-pixel .motto-label { padding-top: 38px; }

/* ---- footer ---- */
.foot { flex: none; background: #fff; }
.legal-title { font-weight: 700; font-stretch: 75%; color: #2c2c2c; white-space: nowrap; }
.legal-text { font-weight: 300; font-stretch: 75%; color: #555; white-space: nowrap; }
.legal-note { font-weight: 700; font-stretch: 75%; color: #2c2c2c; white-space: nowrap; }
.socials { display: flex; }
.social { display: block; flex: none; }

.desktop .foot {
  height: 107px;
  padding: 0 48px 0 53px;
  display: flex;
  align-items: center;
}
.desktop .legal-title { font-size: 18px; line-height: 24px; }
.desktop .legal-text { font-size: 18px; line-height: 21px; margin-top: 4px; }
.contact { margin-left: auto; margin-top: 30px; font-stretch: 75%; font-weight: 300; font-size: 18px; line-height: 21px; color: #555; text-align: right; white-space: nowrap; }
.contact b { font-weight: 700; color: #2c2c2c; }
.desktop .socials { gap: 9.5px; margin-left: 30px; margin-top: 13px; }
.desktop .social { width: 58px; height: 58px; }

.tablet .foot {
  height: 110px;
  padding: 0 16px 0 21px;
  display: flex;
  align-items: center;
  justify-content: space-between;
}
.tablet .legal-title { font-size: 19.2px; line-height: 24px; }
.tablet .legal-text { font-size: 19.2px; line-height: 23.5px; margin-top: 2px; }
.tablet .socials { gap: 11px; }
.tablet .social { width: 61px; height: 61px; }

.mobile .foot {
  height: 175px;
  padding-top: 18px;
  text-align: center;
}
.mobile .socials { justify-content: center; gap: 15.6px; }
.mobile .social { width: 57px; height: 57px; }
.mobile .legal-title { font-size: 14.5px; line-height: 20px; margin-top: 16px; }
.mobile .legal-text { font-size: 10.5px; line-height: 15px; margin-top: 3.5px; }
.mobile .legal-note { font-size: 10px; line-height: 14px; margin-top: 3.5px; }
```
